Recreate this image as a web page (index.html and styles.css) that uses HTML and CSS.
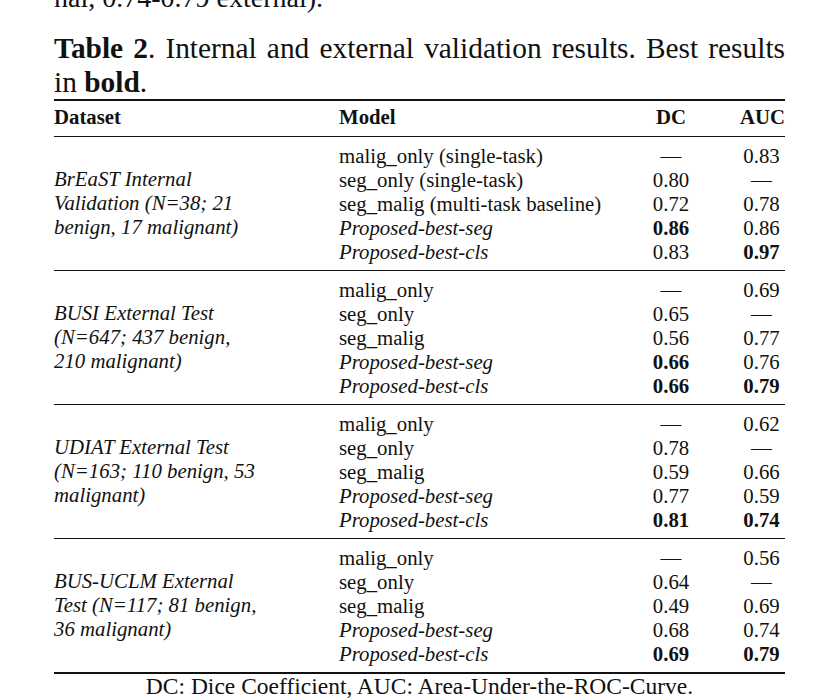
FILE: index.html
```html
<!DOCTYPE html>
<html lang="en">
<head>
<meta charset="utf-8">
<title>Table 2</title>
<link rel="stylesheet" href="styles.css">
</head>
<body>
<div class="page">
  <p class="prev">nal, 0.74-0.79 external).</p>
  <p class="caption"><b>Table 2</b><span>. Internal and external validation results. Best results</span> <span>in</span> <b>bold</b><span>.</span></p>
  <table class="results">
    <colgroup>
      <col class="c-dataset">
      <col class="c-model">
      <col class="c-dc">
      <col class="c-auc">
    </colgroup>
    <thead>
      <tr><th class="ds">Dataset</th><th class="md">Model</th><th class="dc">DC</th><th class="auc">AUC</th></tr>
    </thead>
    <tbody class="group">
      <tr><td class="ds" rowspan="5">BrEaST Internal Validation (N=38; 21 benign, 17 malignant)</td><td class="md">malig_only (single-task)</td><td class="dc">—</td><td class="auc">0.83</td></tr>
      <tr><td class="md">seg_only (single-task)</td><td class="dc">0.80</td><td class="auc">—</td></tr>
      <tr><td class="md">seg_malig (multi-task baseline)</td><td class="dc">0.72</td><td class="auc">0.78</td></tr>
      <tr><td class="md it">Proposed-best-seg</td><td class="dc best">0.86</td><td class="auc">0.86</td></tr>
      <tr><td class="md it">Proposed-best-cls</td><td class="dc">0.83</td><td class="auc best">0.97</td></tr>
    </tbody>
    <tbody class="group">
      <tr><td class="ds" rowspan="5">BUSI External Test (N=647; 437 benign, 210 malignant)</td><td class="md">malig_only</td><td class="dc">—</td><td class="auc">0.69</td></tr>
      <tr><td class="md">seg_only</td><td class="dc">0.65</td><td class="auc">—</td></tr>
      <tr><td class="md">seg_malig</td><td class="dc">0.56</td><td class="auc">0.77</td></tr>
      <tr><td class="md it">Proposed-best-seg</td><td class="dc best">0.66</td><td class="auc">0.76</td></tr>
      <tr><td class="md it">Proposed-best-cls</td><td class="dc best">0.66</td><td class="auc best">0.79</td></tr>
    </tbody>
    <tbody class="group">
      <tr><td class="ds" rowspan="5">UDIAT External Test (N=163; 110 benign, 53 malignant)</td><td class="md">malig_only</td><td class="dc">—</td><td class="auc">0.62</td></tr>
      <tr><td class="md">seg_only</td><td class="dc">0.78</td><td class="auc">—</td></tr>
      <tr><td class="md">seg_malig</td><td class="dc">0.59</td><td class="auc">0.66</td></tr>
      <tr><td class="md it">Proposed-best-seg</td><td class="dc">0.77</td><td class="auc">0.59</td></tr>
      <tr><td class="md it">Proposed-best-cls</td><td class="dc best">0.81</td><td class="auc best">0.74</td></tr>
    </tbody>
    <tbody class="group">
      <tr><td class="ds" rowspan="5">BUS-UCLM External Test (N=117; 81 benign, 36 malignant)</td><td class="md">malig_only</td><td class="dc">—</td><td class="auc">0.56</td></tr>
      <tr><td class="md">seg_only</td><td class="dc">0.64</td><td class="auc">—</td></tr>
      <tr><td class="md">seg_malig</td><td class="dc">0.49</td><td class="auc">0.69</td></tr>
      <tr><td class="md it">Proposed-best-seg</td><td class="dc">0.68</td><td class="auc">0.74</td></tr>
      <tr><td class="md it">Proposed-best-cls</td><td class="dc best">0.69</td><td class="auc best">0.79</td></tr>
    </tbody>
  </table>
  <p class="note">DC: Dice Coefficient, AUC: Area-Under-the-ROC-Curve.</p>
</div>
</body>
</html>
```

FILE: styles.css
```css
html, body {
  margin: 0;
  padding: 0;
  background: #ffffff;
}

body {
  font-family: "Liberation Serif", "Times New Roman", serif;
  color: #111111;
  overflow: hidden;
}

.page {
  width: 731px;
  padding-left: 54px;
}

.prev {
  margin: -19px 0 0 0;
  font-size: 28px;
  line-height: 33.6px;
  white-space: nowrap;
}

.caption {
  margin: 16px 0 0 0;
  font-size: 29.4px;
  line-height: 34px;
  text-align: justify;
}

.caption b {
  font-weight: bold;
}

.results {
  width: 731px;
  table-layout: fixed;
  border-collapse: collapse;
  border-top: 2px solid #111111;
  border-bottom: 2px solid #111111;
  font-size: 20.8px;
  line-height: 24px;
}

.c-dataset { width: 285px; }
.c-model { width: 293px; }
.c-dc { width: 78px; }
.c-auc { width: 75px; }

.results th,
.results td {
  padding: 0;
  vertical-align: middle;
  white-space: nowrap;
}

.results thead th {
  font-weight: bold;
  padding-top: 4px;
  padding-bottom: 7px;
  border-bottom: 1px solid #111111;
}

.results .ds,
.results .md {
  text-align: left;
}

.results td.ds {
  font-style: italic;
  white-space: normal;
  padding-right: 77px;
}

.results .dc {
  text-align: center;
}

.results .auc {
  text-align: center;
  padding-left: 30px;
  padding-right: 2px;
}

.results .it {
  font-style: italic;
}

.results .best {
  font-weight: bold;
}

.group {
  border-top: 1px solid #111111;
}

.group tr:first-child td {
  padding-top: 7px;
}

.group tr:first-child td.ds {
  padding-top: 0;
}

.group tr:last-child td {
  padding-bottom: 6px;
}

.note {
  margin: 0;
  font-size: 23.5px;
  line-height: 24px;
  text-align: center;
}
```
